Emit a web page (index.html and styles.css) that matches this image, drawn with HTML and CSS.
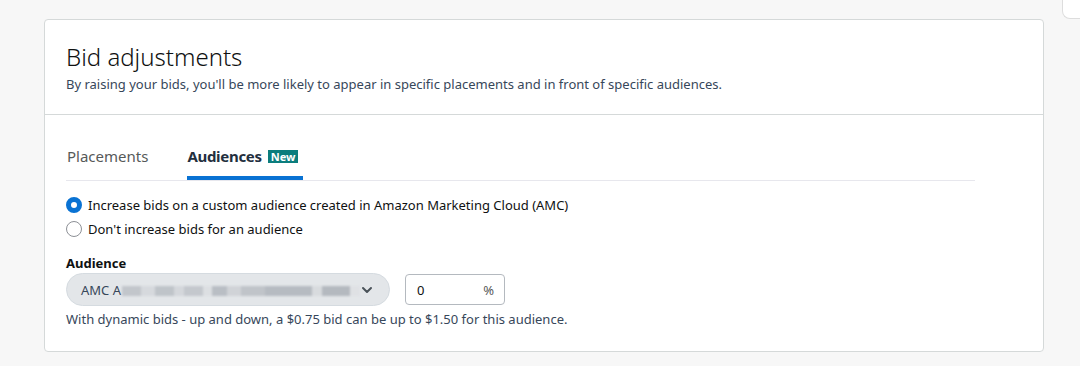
FILE: index.html
```html
<!DOCTYPE html>
<html lang="en">
  <head>
    <meta charset="UTF-8" />
    <meta name="viewport" content="width=device-width, initial-scale=1.0" />
    <title>Bid adjustments</title>
    <link rel="stylesheet" href="styles.css">
  </head>

  <body>
    <div class="page">
      <div class="main">
        <div class="card">
          <div class="card-header">
            <h2>Bid adjustments</h2>
            <p>By raising your bids, you'll be more likely to appear in specific placements and in front of specific audiences.</p>
          </div>

          <div class="card-body">
            <div class="tabs">
              <div class="tab">Placements</div>
              <div class="tab active">Audiences <span class="badge">New</span></div>
            </div>

            <div class="radio-group">
              <label class="radio">
                <span class="dot checked"></span>
                Increase bids on a custom audience created in Amazon Marketing Cloud (AMC)
              </label>
              <label class="radio">
                <span class="dot"></span>
                Don't increase bids for an audience
              </label>
            </div>

            <div class="field-label">Audience</div>
            <div class="field-row">
              <div class="select">
                <span class="select-text">AMC A<span class="redacted"></span></span>
                <svg class="chevron" width="12" height="8" viewBox="0 0 12 8">
                  <path d="M2 2l4 4 4-4" fill="none" stroke="#4a5259" stroke-width="2" stroke-linecap="round" stroke-linejoin="round" />
                </svg>
              </div>
              <div class="percent">
                <span>0</span>
                <span class="unit">%</span>
              </div>
            </div>
            <p class="help">With dynamic bids - up and down, a $0.75 bid can be up to $1.50 for this audience.</p>
          </div>
        </div>
      </div>
      <div class="side"></div>
    </div>
  </body>
</html>
```

FILE: styles.css
```css
body {
  margin: 0;
  padding: 0;
  background-color: #f7f7f7;
  font-family: "Noto Sans", Arial, sans-serif;
  color: #0f1111;
}

.page {
  display: flex;
  align-items: flex-start;
}

.main {
  flex: 1;
  padding: 19px 18px 0 44px;
}

.side {
  width: 17px;
  height: 18px;
  background-color: #ffffff;
  border: 1px solid #dddddd;
  border-top: none;
  border-right: none;
  border-radius: 0 0 0 8px;
}

.card {
  background-color: #ffffff;
  border: 1px solid #d5d9d9;
  border-radius: 4px;
}

.card-header {
  padding: 22px 21px 20px;
  border-bottom: 1px solid #d5d9d9;
}

.card-header h2 {
  margin: 0;
  font-size: 24px;
  font-weight: 300;
  line-height: 30px;
  color: #0f1111;
}

.card-header p {
  margin: 2px 0 0;
  font-size: 13px;
  line-height: 20px;
  color: #37475a;
}

.card-body {
  padding: 30px 21px 22px;
}

.tabs {
  display: flex;
  gap: 39px;
  width: 909px;
  border-bottom: 1px solid #e7e7ed;
}

.tab {
  display: flex;
  align-items: center;
  gap: 6px;
  padding: 0 1px 13px;
  font-size: 15px;
  line-height: 22px;
  color: #565959;
}

.tab.active {
  font-weight: bold;
  letter-spacing: -0.3px;
  color: #232f3e;
  box-shadow: inset 0 -4px 0 #0972d3;
  padding: 0 5px 13px 0;
  margin-left: -1px;
}

.badge {
  background-color: #0b7d7d;
  color: #ffffff;
  font-size: 11px;
  font-weight: bold;
  letter-spacing: 0;
  line-height: 13px;
  padding: 0 3px;
}

.radio-group {
  display: flex;
  flex-direction: column;
  gap: 4px;
  padding-top: 14px;
}

.radio {
  display: flex;
  align-items: center;
  gap: 6px;
  font-size: 13px;
  line-height: 20px;
  color: #0f1111;
}

.dot {
  width: 16px;
  height: 16px;
  border: 1px solid #8d9096;
  border-radius: 50%;
  box-sizing: border-box;
}

.dot.checked {
  border: 5px solid #0972d3;
}

.field-label {
  margin-top: 16px;
  font-size: 13px;
  font-weight: bold;
  line-height: 16px;
}

.field-row {
  display: flex;
  align-items: center;
  gap: 15px;
  margin-top: 2px;
}

.select {
  display: flex;
  align-items: center;
  justify-content: space-between;
  width: 324px;
  height: 33px;
  box-sizing: border-box;
  padding: 0 14px;
  background-color: #e3e6e9;
  border: 1px solid #d5dbe0;
  border-radius: 17px;
  font-size: 13px;
  color: #37475a;
}

.redacted {
  display: inline-block;
  width: 238px;
  height: 10px;
  margin-left: 1px;
  vertical-align: -1px;
  filter: blur(1px);
  background: linear-gradient(90deg, #c2c6cb 0 8%, #d6d9dd 8% 14%, #bfc4c9 14% 22%, #d4d7db 22% 26%, #c4c8cd 26% 34%, #dcdfe2 34% 38%, #b9bec4 38% 44%, #d0d3d7 44% 50%, #c0c4c9 50% 60%, #b6bbc1 60% 80%, #d8dbde 80% 84%, #b4b9bf 84% 96%, #dfe1e4 96%);
}

.chevron {
  margin-right: 2px;
}

.percent {
  display: flex;
  align-items: center;
  justify-content: space-between;
  width: 100px;
  height: 31px;
  box-sizing: border-box;
  padding: 0 10px 0 11px;
  border: 1px solid #b4b9bf;
  border-radius: 4px;
  font-size: 13px;
  color: #0f1111;
}

.unit {
  color: #565959;
}

.help {
  margin: 3px 0 0;
  font-size: 13px;
  line-height: 20px;
  color: #37475a;
}
```
